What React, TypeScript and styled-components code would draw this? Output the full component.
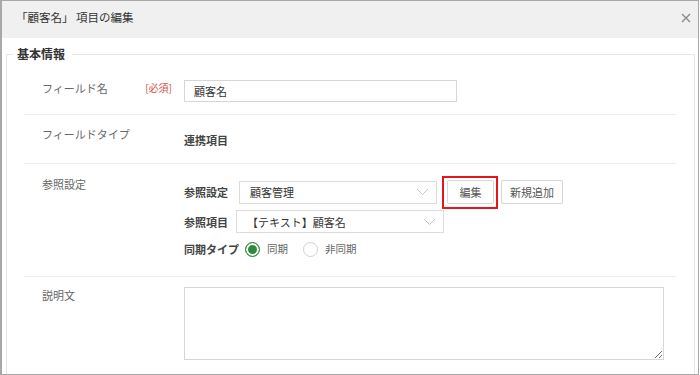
import styled, { createGlobalStyle } from "styled-components";

const GlobalStyle = createGlobalStyle`
  * { box-sizing: border-box; }
  body {
    margin: 0;
    background: #fff;
    font-family: "Noto Sans CJK JP", "Noto Sans", sans-serif;
    color: #333;
  }
`;

const Modal = styled.div`
  width: 699px;
  height: 375px;
  border: 1px solid #a8a8a8;
  border-left-width: 2px;
  overflow: hidden;
  background: #fff;
`;

const Header = styled.div`
  height: 37px;
  background: #f0f0f0;
  display: flex;
  justify-content: space-between;
  align-items: flex-start;
  padding: 7px 7px 0 14px;
`;

const Title = styled.h1`
  margin: 0;
  font-size: 11.5px;
  line-height: 18px;
  font-weight: normal;
  color: #333;
`;

const Close = styled.button`
  border: 0;
  background: none;
  padding: 0;
  margin-top: 5px;
  width: 10px;
  height: 10px;
  display: flex;
  cursor: pointer;
`;

const Body = styled.div`
  padding: 8px 3px 0 4px;
`;

const Fieldset = styled.fieldset`
  margin: 0;
  padding: 0;
  border: 1px solid #e6e6e6;
  min-height: 340px;
`;

const Legend = styled.legend`
  margin-left: 6px;
  padding: 0 7px 0 4px;
  font-size: 12px;
  line-height: 16px;
  font-weight: bold;
  color: #333;
`;

const Rows = styled.div`
  padding: 0 18px 0 17px;
`;

const Row = styled.div<{ $top: number; $bottom?: number; $last?: boolean }>`
  display: grid;
  grid-template-columns: 160px 1fr;
  padding-top: ${(p) => p.$top}px;
  padding-bottom: ${(p) => p.$bottom ?? 0}px;
  border-bottom: ${(p) => (p.$last ? "none" : "1px solid #ececec")};
`;

const Label = styled.div`
  display: flex;
  align-items: flex-start;
  padding-left: 18px;
  font-size: 11px;
  line-height: 16px;
  color: #666;
`;

const Required = styled.span`
  margin-left: auto;
  margin-right: 12px;
  font-size: 10px;
  line-height: 16px;
  color: #d0504a;
`;

const Field = styled.div<{ $offset?: number }>`
  padding-top: ${(p) => p.$offset ?? 0}px;
  display: flex;
  flex-direction: column;
`;

const TextInput = styled.input`
  width: 273px;
  height: 22px;
  border: 1px solid #d6d6d6;
  padding: 0 9px;
  font-family: inherit;
  font-size: 11px;
  color: #333;
  outline: none;
`;

const Value = styled.div`
  font-size: 11px;
  line-height: 16px;
  font-weight: bold;
  color: #444;
`;

const SubRow = styled.div<{ $gap?: number }>`
  display: flex;
  align-items: center;
  margin-bottom: ${(p) => p.$gap ?? 0}px;
`;

const SubLabel = styled.span<{ $width?: number }>`
  width: ${(p) => (p.$width ? `${p.$width}px` : "auto")};
  flex: none;
  font-size: 11px;
  line-height: 16px;
  font-weight: bold;
  color: #444;
`;

const Select = styled.div<{ $width: number }>`
  width: ${(p) => p.$width}px;
  height: 23px;
  border: 1px solid #dcdcdc;
  display: flex;
  align-items: center;
  justify-content: space-between;
  padding: 0 7px 0 10px;
  font-size: 11px;
  color: #333;
`;

const Button = styled.button<{ $width: number; $highlight?: boolean }>`
  position: relative;
  width: ${(p) => p.$width}px;
  height: 24px;
  border: 1px solid #d6d6d6;
  border-radius: 2px;
  background: #fff;
  font-family: inherit;
  font-size: 11px;
  color: #555;
  padding: 0;
  margin-left: ${(p) => (p.$highlight ? 10 : 7)}px;

  ${(p) =>
    p.$highlight &&
    `
    &::after {
      content: "";
      position: absolute;
      left: -6px;
      top: -5px;
      right: -5px;
      bottom: -6px;
      border: 2px solid #e8141c;
    }
  `}
`;

const RadioGroup = styled.div`
  display: flex;
  align-items: center;
`;

const RadioMark = styled.span<{ $checked?: boolean }>`
  width: 15px;
  height: 15px;
  border-radius: 50%;
  border: 1px solid ${(p) => (p.$checked ? "#2e8b3c" : "#d0d0d0")};
  background: ${(p) => (p.$checked ? "#2e8b3c" : "#fff")};
  box-shadow: ${(p) => (p.$checked ? "inset 0 0 0 2px #fff" : "none")};
  flex: none;
`;

const RadioText = styled.span<{ $after: number }>`
  font-size: 10.5px;
  line-height: 16px;
  color: #666;
  margin-left: 7px;
  margin-right: ${(p) => p.$after}px;
`;

const TextArea = styled.textarea`
  width: 480px;
  height: 73px;
  border: 1px solid #d6d6d6;
  font-family: inherit;
  font-size: 11px;
  outline: none;
  display: block;
`;

function Chevron() {
  return (
    <svg width="13" height="8" viewBox="0 0 13 8">
      <path d="M1 1 L6.5 6.5 L12 1" fill="none" stroke="#c8c8c8" strokeWidth="1" />
    </svg>
  );
}

export default function App() {
  return (
    <>
      <GlobalStyle />
      <Modal>
        <Header>
          <Title>「顧客名」 項目の編集</Title>
          <Close aria-label="close">
            <svg width="10" height="10" viewBox="0 0 10 10">
              <path d="M1 1 L9 9 M9 1 L1 9" stroke="#8a8a8a" strokeWidth="1.4" />
            </svg>
          </Close>
        </Header>
        <Body>
          <Fieldset>
            <Legend>基本情報</Legend>
            <Rows>
              <Row $top={18} $bottom={12}>
                <Label>
                  フィールド名
                  <Required>[必須]</Required>
                </Label>
                <Field>
                  <TextInput defaultValue="顧客名" />
                </Field>
              </Row>
              <Row $top={11} $bottom={15}>
                <Label>フィールドタイプ</Label>
                <Field $offset={6}>
                  <Value>連携項目</Value>
                </Field>
              </Row>
              <Row $top={12} $bottom={19}>
                <Label>参照設定</Label>
                <Field $offset={4}>
                  <SubRow $gap={6}>
                    <SubLabel $width={55}>参照設定</SubLabel>
                    <Select $width={198}>
                      顧客管理
                      <Chevron />
                    </Select>
                    <Button $width={47} $highlight>
                      編集
                    </Button>
                    <Button $width={62}>新規追加</Button>
                  </SubRow>
                  <SubRow $gap={8}>
                    <SubLabel $width={52}>参照項目</SubLabel>
                    <Select $width={208}>
                      【テキスト】顧客名
                      <Chevron />
                    </Select>
                  </SubRow>
                  <SubRow>
                    <SubLabel $width={61}>同期タイプ</SubLabel>
                    <RadioGroup>
                      <RadioMark $checked />
                      <RadioText $after={15}>同期</RadioText>
                      <RadioMark />
                      <RadioText $after={0}>非同期</RadioText>
                    </RadioGroup>
                  </SubRow>
                </Field>
              </Row>
              <Row $top={10} $last>
                <Label>説明文</Label>
                <Field>
                  <TextArea />
                </Field>
              </Row>
            </Rows>
          </Fieldset>
        </Body>
      </Modal>
    </>
  );
}
